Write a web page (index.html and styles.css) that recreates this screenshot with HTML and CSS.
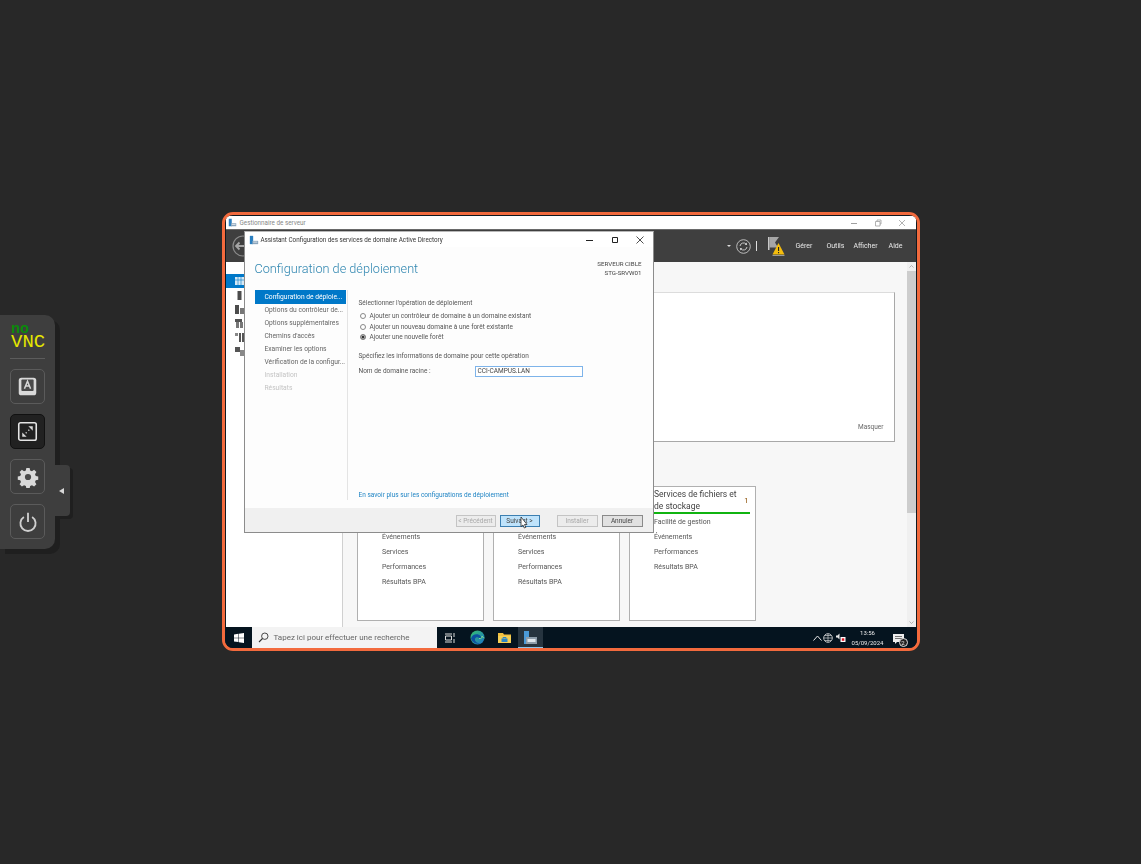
FILE: index.html
```html
<!DOCTYPE html>
<html lang="fr">
<head>
    <meta charset="UTF-8">
    <meta name="viewport" content="width=device-width, initial-scale=1.0">
    <title>noVNC</title>
    <link rel="stylesheet" href="styles.css">
</head>
<body>
    <div class="control-bar">
        <div class="logo"><span class="logo-no">no</span><span class="logo-vnc">VNC</span></div>
        <div class="bar-sep"></div>
        <div class="bar-btn">
            <svg width="21" height="21" viewBox="0 0 24 24"><rect x="2" y="2" width="20" height="20" rx="3" fill="#d9d9d9"/><rect x="5" y="4" width="14" height="13" rx="1" fill="#4a4a4a"/><path d="M8.5 14.5 12 6l3.5 8.5M9.8 11.5h4.4" fill="none" stroke="#d9d9d9" stroke-width="1.7"/></svg>
        </div>
        <div class="bar-btn bar-btn-on">
            <svg width="21" height="21" viewBox="0 0 24 24"><rect x="2" y="2" width="20" height="20" rx="2" fill="none" stroke="#e4e4e4" stroke-width="1.8"/><path d="M13 6h5v5zM11 18H6v-5z" fill="#d8d8d8"/><path d="M14 10l-1 1M10 14l1-1" stroke="#d8d8d8" stroke-width="1.6"/></svg>
        </div>
        <div class="bar-btn">
            <svg width="22" height="22" viewBox="0 0 24 24"><path d="M10 1h4l.6 3 2.2.9 2.6-1.7 2.8 2.8-1.7 2.6.9 2.2 3 .6v4l-3 .6-.9 2.2 1.700 2.600-2.800 2.800-2.600-1.700-2.200.9-.6 3h-4l-.6-3-2.200-.9-2.600 1.700-2.800-2.800 1.700-2.600-.9-2.200-3-.6v-4l3-.6.9-2.200L1.800 6l2.800-2.800 2.600 1.700L9.400 4z" transform="translate(1.2 1.2) scale(.9)" fill="#d9d9d9"/><circle cx="12" cy="12" r="3.4" fill="#4a4a4a"/></svg>
        </div>
        <div class="bar-btn">
            <svg width="22" height="22" viewBox="0 0 24 24"><path d="M7.5 6.500a8.300 8.300 0 1 0 9 0" fill="none" stroke="#cfcfcf" stroke-width="2"/><path d="M12 2v10" stroke="#cfcfcf" stroke-width="2"/></svg>
        </div>
        <div class="bar-handle"><span class="handle-arrow"></span></div>
    </div>

    <div class="screen">
        <div class="manager">
            <div class="manager-title">
                <svg class="app-icon" width="9" height="9" viewBox="0 0 12 12"><path d="M1 1h4v10H1z" fill="#2a7fc0"/><path d="M4 7h7v4H4z" fill="#8aa4bb"/><path d="M5 8h5v1H5z" fill="#e8eef3"/></svg>
                <span>Gestionnaire de serveur</span>
                <div class="win-buttons">
                    <svg width="8" height="8" viewBox="0 0 8 8"><path d="M1 4.500h6" stroke="#a0a0a0"/></svg>
                    <svg width="8" height="8" viewBox="0 0 8 8"><path d="M1.500 2.500h4.500v4.500h-4.500zM3 2.500V1h4v4H6" fill="none" stroke="#a0a0a0" stroke-width=".8"/></svg>
                    <svg width="8" height="8" viewBox="0 0 8 8"><path d="M1 1l6 6M7 1L1 7" stroke="#a0a0a0" stroke-width=".8"/></svg>
                </div>
            </div>
            <div class="manager-head">
                <svg class="back-btn" width="22" height="22" viewBox="0 0 22 22"><circle cx="11" cy="11" r="10" fill="none" stroke="#8a8a8a" stroke-width="1.200"/><path d="M4 11h8M7.500 7.500 4 11l3.500 3.500" fill="none" stroke="#a5a5a5" stroke-width="1.800"/></svg>
                <div class="head-tools">
                    <span class="drop-tri"></span>
                    <svg width="15" height="15" viewBox="0 0 15 15"><circle cx="7.500" cy="7.500" r="6.800" fill="none" stroke="#c8c8c8" stroke-width=".9"/><path d="M4 7a3.600 3.600 0 0 1 6.300-1.800M11 8a3.600 3.600 0 0 1-6.300 1.800" fill="none" stroke="#c8c8c8"/><path d="M11 3.500v2.400H8.600zM4 11.500V9.100h2.400z" fill="#c8c8c8"/></svg>
                    <span class="tool-sep"></span>
                    <div class="flag">
                        <svg width="17" height="20" viewBox="0 0 17 20"><path d="M0 0h1.500v13H0z" fill="#c8c8c8"/><path d="M1.500 0H11L7 5.500l3 5H1.500z" fill="#a6a6a6"/><path d="M10.500 6 16.500 17.500H4.500z" fill="#f5bd0d"/><path d="M10 10h1.100v4H10zM10 15h1.100v1.200H10z" fill="#222"/><path d="M4.500 18.500h12" stroke="#999"/></svg>
                    </div>
                </div>
                <nav class="head-menu">
                    <span class="menu-gerer">Gérer</span>
                    <span class="menu-outils">Outils</span>
                    <span class="menu-afficher">Afficher</span>
                    <span class="menu-aide">Aide</span>
                </nav>
            </div>
            <div class="manager-body">
                <aside class="side-nav">
                    <div class="side-item side-item-on">
                        <svg width="9" height="8" viewBox="0 0 9 8"><path d="M0 0h9v8H0z" fill="#d5e8f5"/><path d="M3 0v8M6 0v8M0 3h9" stroke="#0078c8" stroke-width=".6"/></svg>
                    </div>
                    <div class="side-item"><svg width="9" height="9" viewBox="0 0 9 9"><path d="M2.500 0h4v9h-4z" fill="#4c4c4c"/></svg></div>
                    <div class="side-item"><svg width="9" height="9" viewBox="0 0 9 9"><path d="M0 0h4v9H0z" fill="#4c4c4c"/><path d="M5 3h4v6H5z" fill="#777"/></svg></div>
                    <div class="side-item"><svg width="9" height="9" viewBox="0 0 9 9"><path d="M0 0h7v3H0z" fill="#555"/><path d="M1 3h3v6H1zM5 3h3v6H5z" fill="#777"/></svg></div>
                    <div class="side-item"><svg width="9" height="9" viewBox="0 0 9 9"><path d="M0 0h3v3H0z" fill="#888"/><path d="M4 0h2v9H4zM7 0h2v9H7z" fill="#555"/></svg></div>
                    <div class="side-item"><svg width="9" height="9" viewBox="0 0 9 9"><path d="M0 0h5v5H0z" fill="#555"/><path d="M5 3h4v6H5z" fill="#888"/></svg></div>
                </aside>
                <main class="dashboard">
                    <section class="welcome">
                        <span class="hide-link">Masquer</span>
                    </section>
                    <section class="roles">
                        <div class="role-card">
                            <ul class="role-list role-list-low">
                                <li>Événements</li>
                                <li>Services</li>
                                <li>Performances</li>
                                <li>Résultats BPA</li>
                            </ul>
                        </div>
                        <div class="role-card">
                            <ul class="role-list role-list-low">
                                <li>Événements</li>
                                <li>Services</li>
                                <li>Performances</li>
                                <li>Résultats BPA</li>
                            </ul>
                        </div>
                        <div class="role-card">
                            <div class="role-head">
                                <span class="role-name">Services de fichiers et de stockage</span>
                                <span class="role-count">1</span>
                            </div>
                            <ul class="role-list role-list-top">
                                <li>Facilité de gestion</li>
                                <li>Événements</li>
                                <li>Performances</li>
                                <li>Résultats BPA</li>
                            </ul>
                        </div>
                    </section>
                </main>
                <div class="scrollbar">
                    <div class="scroll-up">
                        <svg width="5" height="3" viewBox="0 0 5 3"><path d="M.500 2.500l2-2 2 2" fill="none" stroke="#999" stroke-width=".7"/></svg>
                    </div>
                    <div class="scroll-thumb"></div>
                    <div class="scroll-down">
                        <svg width="5" height="3" viewBox="0 0 5 3"><path d="M.500 .5l2 2 2-2" fill="none" stroke="#999" stroke-width=".7"/></svg>
                    </div>
                </div>
            </div>

            <div class="wizard">
                <div class="wizard-title">
                    <svg width="10" height="10" viewBox="0 0 12 12"><path d="M1 1h4v10H1z" fill="#2a7fc0"/><path d="M4 7h7v4H4z" fill="#8aa4bb"/><path d="M5 8h5v1H5z" fill="#e8eef3"/></svg>
                    <span>Assistant Configuration des services de domaine Active Directory</span>
                    <div class="wizard-buttons">
                        <svg width="10" height="10" viewBox="0 0 10 10"><path d="M1 5.500h7" stroke="#222"/></svg>
                        <svg width="10" height="10" viewBox="0 0 10 10"><path d="M2.500 2.500h5v5h-5z" fill="none" stroke="#222"/></svg>
                        <svg width="10" height="10" viewBox="0 0 10 10"><path d="M1.500 1.500l7 7M8.500 1.500l-7 7" stroke="#222" stroke-width=".8"/></svg>
                    </div>
                </div>
                <div class="wizard-head">
                    <h1>Configuration de déploiement</h1>
                    <div class="target">SERVEUR CIBLE<br>STG-SRVW01</div>
                </div>
                <div class="wizard-main">
                    <ul class="steps">
                        <li class="step-on">Configuration de déploie...</li>
                        <li>Options du contrôleur de...</li>
                        <li>Options supplémentaires</li>
                        <li>Chemins d'accès</li>
                        <li>Examiner les options</li>
                        <li>Vérification de la configur...</li>
                        <li class="step-off">Installation</li>
                        <li class="step-off">Résultats</li>
                    </ul>
                    <div class="wizard-form">
                        <p class="form-label">Sélectionner l'opération de déploiement</p>
                        <div class="radios">
                            <div class="radio-row"><span class="radio"></span>Ajouter un contrôleur de domaine à un domaine existant</div>
                            <div class="radio-row"><span class="radio"></span>Ajouter un nouveau domaine à une forêt existante</div>
                            <div class="radio-row"><span class="radio radio-on"></span>Ajouter une nouvelle forêt</div>
                        </div>
                        <p class="form-label form-label-2">Spécifiez les informations de domaine pour cette opération</p>
                        <div class="domain-row">
                            <span class="domain-label">Nom de domaine racine :</span>
                            <div class="domain-input">CCI-CAMPUS.LAN</div>
                        </div>
                        <a class="more-link">En savoir plus sur les configurations de déploiement</a>
                    </div>
                </div>
                <div class="wizard-foot">
                    <button class="btn btn-off btn-nav">&lt; Précédent</button>
                    <button class="btn btn-hover btn-nav">Suivant &gt;</button>
                    <button class="btn btn-off btn-install">Installer</button>
                    <button class="btn">Annuler</button>
                </div>
            </div>
        </div>

        <div class="taskbar">
            <div class="start">
                <svg width="10" height="10" viewBox="0 0 10 10"><path d="M0 1.400 4.300.8v3.900H0zM4.800.7 10 0v4.700H4.800zM0 5.200h4.300v3.900L0 8.600zM4.800 5.200H10V10l-5.200-.7z" fill="#fff"/></svg>
            </div>
            <div class="search">
                <svg width="11" height="11" viewBox="0 0 11 11"><circle cx="6.800" cy="4.200" r="3.200" fill="none" stroke="#333" stroke-width=".9"/><path d="M4.500 6.500 1 10" stroke="#333" stroke-width="1.100"/></svg>
                <span>Tapez ici pour effectuer une recherche</span>
            </div>
            <div class="task-icons">
                <div class="task-icon">
                    <svg width="10" height="10" viewBox="0 0 10 10"><path d="M0 1h7M0 9h7" stroke="#ddd"/><path d="M.500 3h6v4h-6z" fill="none" stroke="#ddd"/><path d="M9 0v4M9 6v4" stroke="#ddd"/></svg>
                </div>
                <div class="task-icon">
                    <svg width="15" height="15" viewBox="0 0 15 15"><defs><linearGradient id="edge" x1="0" y1="0" x2="1" y2="1"><stop offset="0" stop-color="#36c26e"/><stop offset="1" stop-color="#1a70c8"/></linearGradient></defs><circle cx="7.500" cy="7.500" r="7" fill="url(#edge)"/><path d="M1 8.500C2 4 8 3 10.500 6c1 1.300.3 2.500-1.500 2.500 0-1.500-3.500-2-4 .5-.4 2.500 2.500 4.500 5.500 4.300A7 7 0 0 1 1 8.500z" fill="#0c4f9e"/><path d="M9 8.500c2 .5 3.500-.7 3-2.500.8 1.500 1.600 1.500 2.400 2" fill="none" stroke="#7fe08f"/></svg>
                </div>
                <div class="task-icon">
                    <svg width="13" height="12" viewBox="0 0 13 12"><path d="M0 1h5l1 1.500h7V11H0z" fill="#f0c040"/><path d="M0 4h13v7H0z" fill="#f5cf55"/><path d="M3.500 6.500h6V10h-6z" fill="#2a86c8"/><path d="M5 6.500v-1h3v1" fill="none" stroke="#2a86c8"/></svg>
                </div>
                <div class="task-icon task-icon-on">
                    <svg width="14" height="13" viewBox="0 0 14 13"><path d="M1 0h5v13H1z" fill="#4a9ad8"/><path d="M3 6h11v7H3z" fill="#8d9daa"/><path d="M4.500 8h8v3h-8z" fill="#dfe6ec"/></svg>
                </div>
            </div>
            <div class="tray">
                <svg class="tray-up" width="9" height="6" viewBox="0 0 9 6"><path d="M.500 5.500 4.500 1l4 4.500" fill="none" stroke="#e8e8e8"/></svg>
                <svg width="10" height="10" viewBox="0 0 10 10"><circle cx="5" cy="5" r="4.300" fill="none" stroke="#e8e8e8" stroke-width=".8"/><path d="M5 .7v8.600M.7 5h8.600M2 2.500h6M2 7.500h6" stroke="#e8e8e8" stroke-width=".6"/></svg>
                <svg width="10" height="10" viewBox="0 0 10 10"><path d="M0 2.500h1.500L3.500 .5v6L1.500 4.500H0z" fill="#e8e8e8"/><path d="M4.500 4h5v5h-5z" fill="#fff"/><path d="M5.800 5.300h2.500v2.500H5.800z" fill="#e01020"/></svg>
                <div class="clock">13:56<br>05/09/2024</div>
                <div class="notif">
                    <svg width="13" height="13" viewBox="0 0 13 13"><path d="M1 1h11v8H5L3 11V9H1z" fill="#eee"/><path d="M3 3.500h7M3 5.500h7" stroke="#222" stroke-width=".6"/></svg>
                    <span class="notif-count">2</span>
                </div>
            </div>
        </div>

        <svg class="mouse" width="8" height="12" viewBox="0 0 8 12"><path d="M1 0v9.500L3 8l1.300 3 1.500-.6L4.500 7.500H7z" fill="#fff" stroke="#111" stroke-width=".7"/></svg>
    </div>
</body>
</html>
```

FILE: styles.css
```css
* {
    margin: 0;
    padding: 0;
    box-sizing: border-box;
}

body {
    display: flex;
    align-items: center;
    justify-content: center;
    width: 100vw;
    height: 100vh;
    background: #282828;
    font-family: Roboto, Arial, sans-serif;
    overflow: hidden;
}

ul {
    list-style: none;
}

/* noVNC control bar */

.control-bar {
    position: absolute;
    left: 0;
    top: 315px;
    width: 55px;
    height: 234px;
    padding: 10px 10px 0;
    display: flex;
    flex-direction: column;
    background: #3e3e3e;
    border-radius: 0 10px 10px 0;
    box-shadow: 5px 5px 0 #1f1f1f;
}

.logo {
    height: 23px;
    display: flex;
    flex-direction: column;
    align-items: flex-start;
    font-family: "Liberation Mono", monospace;
    line-height: 10px;
}

.logo-no {
    height: 10px;
    margin-left: 1px;
    color: #0a8a0a;
    font-size: 15px;
    font-weight: bold;
}

.logo-vnc {
    height: 12px;
    margin: 1px 0 0 1px;
    color: #e6e600;
    font-size: 19px;
    line-height: 12px;
}

.bar-sep {
    height: 1px;
    margin-top: 10px;
    background: #5c5c5c;
}

.bar-btn {
    width: 35px;
    height: 35px;
    margin-top: 10px;
    display: flex;
    align-items: center;
    justify-content: center;
    border: 1px solid #5b5b5b;
    border-radius: 5px;
}

.bar-btn-on {
    background: #212121;
    border-color: #111;
}

.bar-handle {
    position: absolute;
    left: 55px;
    top: 150px;
    width: 15px;
    height: 51px;
    display: flex;
    align-items: center;
    justify-content: center;
    background: #3e3e3e;
    border-radius: 0 4px 4px 0;
    box-shadow: 3px 3px 0 #1f1f1f;
}

.handle-arrow {
    width: 0;
    height: 0;
    margin-left: -3px;
    border: 3px solid transparent;
    border-left-width: 0;
    border-right: 5px solid #d8d8d8;
}

/* remote screen */

.screen {
    position: relative;
    width: 698px;
    height: 439px;
    margin-bottom: 1px;
    padding: 1px 1px 0;
    display: flex;
    flex-direction: column;
    background: #10181f;
    border: 3px solid #f26a3d;
    border-radius: 11px;
    overflow: hidden;
}

.manager {
    position: relative;
    flex: 1;
    min-height: 0;
    display: flex;
    flex-direction: column;
    background: #fff;
    filter: blur(.3px);
}

.manager-title {
    height: 13px;
    padding-left: 2px;
    display: flex;
    align-items: center;
    gap: 3px;
    font-size: 6.300px;
    color: #888;
    background: #fff;
}

.win-buttons {
    margin-left: auto;
    padding-right: 10px;
    display: flex;
    gap: 16px;
}

.manager-head {
    height: 33px;
    display: flex;
    align-items: center;
    background: #3f3f3f;
    border-top: 1px solid #6a6a6a;
    color: #e8e8e8;
    font-size: 7px;
}

.back-btn {
    margin-left: 6px;
}

.head-tools {
    margin-left: auto;
    display: flex;
    align-items: center;
}

.drop-tri {
    width: 0;
    height: 0;
    border: 2px solid transparent;
    border-top: 2.500px solid #ddd;
    border-bottom-width: 0;
    margin-right: 5px;
}

.tool-sep {
    width: 1px;
    height: 10px;
    margin: 0 11px 0 5px;
    background: #ddd;
}

.flag {
    height: 20px;
    margin-top: 2px;
}

.head-menu {
    display: flex;
    margin-left: 11px;
    padding-right: 13px;
}

.menu-outils {
    margin-left: 14px;
}

.menu-afficher {
    margin-left: 9px;
}

.menu-aide {
    margin-left: 11px;
}

.manager-body {
    flex: 1;
    min-height: 0;
    display: flex;
}

.side-nav {
    width: 117px;
    padding-top: 12px;
    background: #fff;
    border-right: 1px solid #d0d0d0;
}

.side-item {
    height: 14px;
    display: flex;
    align-items: center;
    padding-left: 9px;
}

.side-item-on {
    background: #0078c8;
}

.dashboard {
    flex: 1;
    min-width: 0;
    padding: 30px 12px 0 14px;
    background: #f7f7f7;
    overflow: hidden;
}

.welcome {
    height: 150px;
    padding: 0 10px 10px 0;
    display: flex;
    align-items: flex-end;
    justify-content: flex-end;
    background: #fff;
    border: 1px solid #a8a8a8;
    border-top-color: #dcdcdc;
    font-size: 6.500px;
    color: #666;
}

.roles {
    margin-top: 44px;
    display: flex;
    gap: 9px;
}

.role-card {
    width: 127px;
    height: 135px;
    padding: 0 5px 0 24.500px;
    background: #fff;
    border: 1px solid #b0b0b0;
    font-size: 7px;
    color: #555;
}

.role-head {
    position: relative;
    height: 26px;
    margin-top: 1px;
    border-bottom: 2px solid #10b410;
    line-height: 12px;
    color: #444;
    font-size: 8.500px;
}

.role-name {
    display: block;
    width: 88px;
}

.role-count {
    position: absolute;
    right: 1px;
    top: 7px;
    color: #8a4c00;
    font-size: 7.500px;
}

.role-list-low {
    margin-top: 43px;
}

.role-list-top {
    margin-top: 1px;
}

.role-list li {
    height: 15px;
    line-height: 15px;
}

.scrollbar {
    width: 9px;
    display: flex;
    flex-direction: column;
    background: #f0f0f0;
}

.scroll-up {
    height: 9px;
    display: flex;
    align-items: center;
    justify-content: center;
}

.scroll-thumb {
    height: 242px;
    background: #cdcdcd;
}

.scroll-down {
    margin-top: auto;
    height: 9px;
    display: flex;
    align-items: center;
    justify-content: center;
}

/* wizard window */

.wizard {
    position: absolute;
    left: 18px;
    top: 15px;
    width: 410px;
    height: 302px;
    display: flex;
    flex-direction: column;
    background: #fdfdfd;
    border: 1px solid #8c8c8c;
    border-top-color: #b8b8b8;
}

.wizard-title {
    height: 15px;
    padding-left: 4px;
    display: flex;
    align-items: center;
    gap: 2px;
    background: #fff;
    font-size: 6.300px;
    color: #333;
}

.wizard-buttons {
    margin-left: auto;
    padding-right: 8px;
    display: flex;
    gap: 15px;
}

.wizard-head {
    height: 43px;
    padding: 6px 11px 0 10px;
    display: flex;
    justify-content: space-between;
}

.wizard-head h1 {
    font-size: 12.700px;
    font-weight: 300;
    line-height: 32px;
    color: #2f86b0;
}

.target {
    padding-top: 7px;
    font-size: 6.200px;
    line-height: 9px;
    text-align: right;
    color: #444;
}

.wizard-main {
    flex: 1;
    min-height: 0;
    padding: 0 0 8px 10px;
    display: flex;
}

.steps {
    width: 93px;
    border-right: 1px solid #e4e4e4;
    font-size: 6.700px;
    color: #666;
}

.steps li {
    height: 13px;
    line-height: 13px;
    padding-left: 10px;
    white-space: nowrap;
}

.steps .step-on {
    height: 14px;
    line-height: 14px;
    margin-right: 1px;
    background: #0078c8;
    color: #fff;
}

.steps .step-off {
    color: #c4c4c4;
}

.wizard-form {
    flex: 1;
    padding: 8px 0 0 11px;
    display: flex;
    flex-direction: column;
    font-size: 6.500px;
    color: #555;
}

.form-label {
    height: 10px;
    line-height: 10px;
}

.form-label-2 {
    margin-top: 8px;
}

.radios {
    margin-top: 3px;
}

.radio-row {
    height: 10.500px;
    display: flex;
    align-items: center;
    gap: 4px;
    white-space: nowrap;
}

.radio {
    width: 6px;
    height: 6px;
    margin-left: 1px;
    background: #fff;
    border: 1px solid #888;
    border-radius: 50%;
}

.radio-on {
    background: #333;
    box-shadow: inset 0 0 0 .5px #fff;
}

.domain-row {
    height: 11px;
    margin-top: 5px;
    display: flex;
    align-items: center;
}

.domain-label {
    width: 116px;
}

.domain-input {
    width: 108px;
    height: 11px;
    padding-left: 2px;
    line-height: 9px;
    background: #fff;
    border: 1px solid #7eb4ea;
    color: #444;
}

.more-link {
    margin-top: auto;
    height: 10px;
    line-height: 10px;
    color: #1f84c4;
}

.wizard-foot {
    height: 24px;
    padding: 7px 10px 0 0;
    display: flex;
    justify-content: flex-end;
    gap: 4px;
    background: #f0f0f0;
}

.btn {
    width: 41px;
    height: 12px;
    font-family: inherit;
    font-size: 6.500px;
    line-height: 10px;
    color: #444;
    background: #e1e1e1;
    border: 1px solid #8a8a8a;
}

.btn-nav {
    width: 40px;
}

.btn-off {
    color: #a8a8a8;
    background: #ececec;
    border-color: #c4c4c4;
}

.btn-install {
    margin-left: 13px;
}

.btn-hover {
    background: #bfe3fb;
    border-color: #3c7fb1;
}

/* taskbar */

.taskbar {
    height: 21px;
    margin: 0 -1px;
    display: flex;
    align-items: stretch;
    background: #05141f;
    filter: blur(.3px);
}

.start {
    width: 27px;
    padding-left: 2px;
    display: flex;
    align-items: center;
    justify-content: center;
}

.search {
    width: 185px;
    padding-left: 6px;
    display: flex;
    align-items: center;
    gap: 5px;
    background: #f3f3f3;
    color: #666;
    font-size: 8px;
}

.task-icons {
    display: flex;
}

.task-icon {
    width: 27px;
    display: flex;
    align-items: center;
    justify-content: center;
}

.task-icon-on {
    width: 25px;
    background: #26343f;
    border-bottom: 1px solid #8fc4ea;
}

.tray {
    margin-left: auto;
    padding-right: 12px;
    display: flex;
    align-items: center;
    gap: 3px;
    color: #e8e8e8;
}

.tray-up {
    margin-right: -2px;
}

.clock {
    width: 38px;
    margin-right: 2px;
    font-size: 6px;
    line-height: 10px;
    text-align: center;
}

.notif {
    position: relative;
    height: 13px;
}

.notif-count {
    position: absolute;
    right: -3px;
    bottom: -3px;
    width: 9px;
    height: 9px;
    background: #222;
    border: 1px solid #ddd;
    border-radius: 50%;
    font-size: 6px;
    line-height: 7px;
    text-align: center;
}

.mouse {
    position: absolute;
    left: 295px;
    top: 302px;
}
```
